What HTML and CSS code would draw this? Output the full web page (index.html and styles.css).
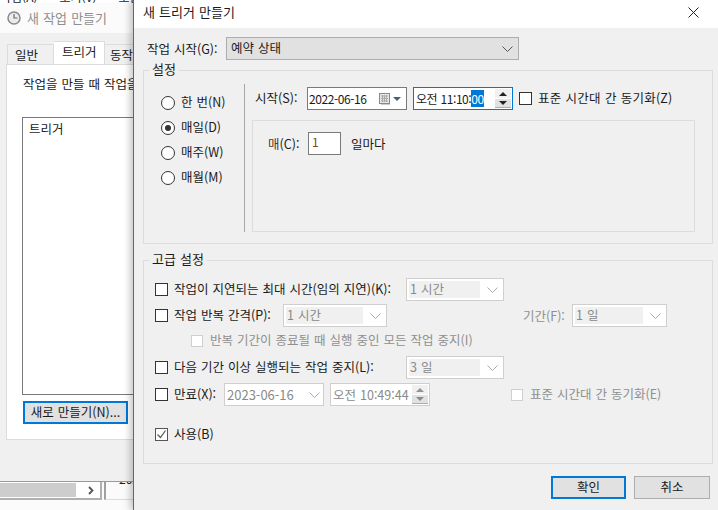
FILE: index.html
```html
<!DOCTYPE html>
<html lang="ko">
<head>
<meta charset="utf-8">
<title>새 트리거 만들기</title>
<link rel="stylesheet" href="styles.css">
</head>
<body>
<section class="backwin">
  <div class="strip"><span>작업(A)</span><span>보기(V)</span><span>도움말(H)</span></div>
  <div class="backtitle">
    <svg class="clock" width="14" height="14" viewBox="0 0 14 14"><circle cx="7" cy="7" r="6" fill="#ececec" stroke="#8a8a8a" stroke-width="1.500"/><path d="M7 3v4h3.500" fill="none" stroke="#6a6a6a" stroke-width="1.200"/></svg>
    <span>새 작업 만들기</span>
  </div>
  <div class="tabs">
    <span class="tab first">일반</span><span class="tab on">트리거</span><span class="tab last">동작</span>
  </div>
  <div class="panel">
    <p class="intro">작업을 만들 때 작업을 시작할 조건을</p>
    <div class="listbox">트리거</div>
    <div class="newbtn">새로 만들기(N)...</div>
  </div>
  <div class="backbottom">
    <div class="hscroll"><div class="thumb"></div><svg width="8" height="9" viewBox="0 0 8 9"><path d="M2 1l3.500 3.500L2 8" fill="none" stroke="#555" stroke-width="1.800"/></svg></div>
    <div class="cell"><span>2022</span></div>
  </div>
</section>

<section class="dialog">
  <header class="title"><span>새 트리거 만들기</span>
    <svg class="close" width="11" height="11" viewBox="0 0 11 11"><path d="M.5.5l10 10M10.500.5l-10 10" stroke="#222" fill="none"/></svg>
  </header>
  <div class="body">
    <div class="startrow">
      <label class="startlabel">작업 시작(G):</label>
      <div class="select active w293"><span class="seltext">예약 상태</span><svg class="chev" width="11" height="6" viewBox="0 0 11 6"><path d="M.5.5l5 5 5-5" fill="none" stroke="#555"/></svg></div>
    </div>

    <div class="group settings">
      <span class="legend">설정</span>
      <div class="radios">
        <div class="radio"><i class="dot"></i><span>한 번(N)</span></div>
        <div class="radio"><i class="dot sel"></i><span>매일(D)</span></div>
        <div class="radio"><i class="dot"></i><span>매주(W)</span></div>
        <div class="radio"><i class="dot"></i><span>매월(M)</span></div>
      </div>
      <div class="sched">
        <div class="row schedtop">
          <label class="lab52">시작(S):</label>
          <div class="field w100"><span class="tight">2022-06-16</span>
            <svg class="cal" width="25" height="14" viewBox="0 0 25 14"><rect x="1.500" y="1.500" width="10" height="10" fill="#e8e8e8" stroke="#888"/><path d="M3 4h7M3 6.500h7M3 9h7M4.500 3v7M6.500 3v7M8.500 3v7" stroke="#aaa" fill="none"/><path d="M12 12.500h-9" stroke="#ccc"/><path d="M15 5h8l-4 4z" fill="#4d5d73"/></svg>
          </div>
          <div class="field focus w100 gap6"><span class="semi">오전 11:10:<b class="hl">00</b></span>
            <div class="spin"><i class="up"></i><i class="down"></i></div>
          </div>
          <i class="cb gap6"></i><span class="cblabel">표준 시간대 간 동기화(Z)</span>
        </div>
        <div class="recur">
          <div class="row">
            <label class="lab40"><span class="accent">매</span>(C):</label>
            <div class="field w33"><span class="one">1</span></div>
            <span class="every">일마다</span>
          </div>
        </div>
      </div>
    </div>

    <div class="group advanced">
      <span class="legend">고급 설정</span>
      <div class="row r1">
        <i class="cb"></i><label class="lab232">작업이 지연되는 최대 시간(임의 지연)(K):</label>
        <div class="select dis w98"><span class="in">1 시간</span><svg class="chev" width="11" height="6" viewBox="0 0 11 6"><path d="M.5.5l5 5 5-5" fill="none" stroke="#aaa"/></svg></div>
      </div>
      <div class="row r2">
        <i class="cb"></i><label class="lab109">작업 반복 간격(P):</label>
        <div class="select dis w104"><span class="in">1 시간</span><svg class="chev" width="11" height="6" viewBox="0 0 11 6"><path d="M.5.5l5 5 5-5" fill="none" stroke="#aaa"/></svg></div>
        <label class="lab49 off">기간(F):</label>
        <div class="select dis w95"><span class="in">1 일</span><svg class="chev" width="11" height="6" viewBox="0 0 11 6"><path d="M.5.5l5 5 5-5" fill="none" stroke="#aaa"/></svg></div>
      </div>
      <div class="row r3"><i class="cb disabled"></i><span class="off">반복 기간이 종료될 때 실행 중인 모든 작업 중지(I)</span></div>
      <div class="row r4">
        <i class="cb"></i><label class="lab232">다음 기간 이상 실행되는 작업 중지(L):</label>
        <div class="select dis w98"><span class="in">3 일</span><svg class="chev" width="11" height="6" viewBox="0 0 11 6"><path d="M.5.5l5 5 5-5" fill="none" stroke="#aaa"/></svg></div>
      </div>
      <div class="row r5">
        <i class="cb"></i><label class="lab50">만료(X):</label>
        <div class="field dimmed w100"><span class="big">2023-06-16</span><svg class="chev" width="11" height="6" viewBox="0 0 11 6"><path d="M.5.5l5 5 5-5" fill="none" stroke="#aaa"/></svg></div>
        <div class="field dimmed w100 gap6"><span class="mid">오전 10:49:44</span><div class="spin dimspin"><i class="up"></i><i class="down"></i></div></div>
        <i class="cb disabled tz"></i><span class="off">표준 시간대 간 동기화(E)</span>
      </div>
      <div class="row r6">
        <i class="cb checked"><svg width="11" height="11" viewBox="0 0 11 11"><path d="M1.500 5.500l3 3 5-7" fill="none" stroke="#555" stroke-width="1.200"/></svg></i><label>사용(B)</label>
      </div>
    </div>

    <footer class="actions">
      <div class="btn primary">확인</div>
      <div class="btn">취소</div>
    </footer>
  </div>
</section>
</body>
</html>
```
FILE: styles.css
```css
* { box-sizing: border-box; }
html, body { margin: 0; height: 100%; }
body {
  width: 718px; height: 510px; position: relative; overflow: hidden;
  background: #fff; color: #1a1a1a;
  font: 12.5px/18px "Noto Sans CJK KR", "Noto Sans", sans-serif;
  word-spacing: .5px;
}
i { font-style: normal; display: block; }

/* back window */
.backwin { position: absolute; left: 0; top: 0; width: 134px; height: 510px; overflow: hidden; background: #f0f0f0; display: flex; flex-direction: column; }
.strip { height: 3px; background: #fff; overflow: hidden; display: flex; gap: 22px; font-size: 12px; line-height: 12px; white-space: nowrap; flex: none; }
.strip span { margin-top: -9px; }
.backtitle { height: 30px; background: #fbfbfb; display: flex; align-items: center; padding-left: 7px; color: #8e8e8e; flex: none; font-size: 13px; }
.backtitle span { margin-left: 6px; white-space: nowrap; }
.clock { flex: none; }
.tabs { height: 31px; flex: none; display: flex; align-items: flex-end; padding-left: 7px; white-space: nowrap; }
.tab { height: 20px; line-height: 19px; padding: 0 7px; background: #f0f0f0; border: 1px solid #dcdcdc; border-bottom: 0; border-left: 0; flex: none; }
.tab.first { width: 47px; padding-left: 7px; border-left: 1px solid #dcdcdc; }
.tab.on { width: 51px; height: 23px; background: #fff; line-height: 19px; padding-left: 8px; position: relative; z-index: 1; }
.tab.last { padding-left: 5px; }
.panel { height: 376px; flex: none; width: 160px; margin-left: 6px; background: #fff; border: 1px solid #dcdcdc; padding: 10px 0 0 16px; }
.intro { margin: 0; white-space: nowrap; height: 18px; }
.listbox { width: 140px; height: 278px; margin-top: 24px; margin-left: -1px; border: 1px solid #7a7a7a; padding: 2px 0 0 6px; background: #fff; }
.newbtn { width: 105px; height: 23px; margin-top: 6px; background: #e1e1e1; border: 2px solid #0078d7; line-height: 18px; text-align: center; white-space: nowrap; }
.backbottom { margin-top: 41px; border-top: 1px solid #9a9a9a; display: flex; flex: 1; background: #fbfbfb; }
.hscroll { width: 102px; height: 18px; border-right: 2px solid #b0b0b0; border-bottom: 2px solid #b0b0b0; background: #fff; display: flex; align-items: center; }
.thumb { width: 76px; height: 14px; background: #cdcdcd; margin-right: 11px; }
.cell { margin-left: 2px; height: 18px; padding-left: 13px; border-left: 2px solid #a0a0a0; border-bottom: 1px solid #dcdcdc; overflow: hidden; font-size: 12px; line-height: 12px; white-space: nowrap; flex: 1; }
.cell span { display: block; margin-top: -9px; }

/* front dialog */
.dialog { position: absolute; left: 133px; top: 0; width: 585px; height: 510px; background: #f0f0f0; border-left: 1px solid #666; box-shadow: -3px 0 7px rgba(0,0,0,.22); }
.title { height: 28px; background: #fff; display: flex; align-items: center; justify-content: space-between; padding: 0 19px 4px 9px; font-size: 13px; }
.body { padding: 9px 5px 0 9px; }
.startrow { display: flex; align-items: center; height: 23px; }
.startlabel { width: 83px; padding-left: 4px; white-space: nowrap; }
.w293 { width: 293px; }
.w98 { width: 98px; } .w104 { width: 104px; } .w95 { width: 95px; } .w100 { width: 100px; } .w33 { width: 33px; }
.select { height: 23px; display: flex; align-items: center; justify-content: space-between; flex: none; border: 1px solid #adadad; padding: 0 5px 0 4px; }
.select.active { background: #e1e1e1; }
.seltext { margin-top: -2px; }
.select.dis { background: #fff; border-color: #cfcfcf; padding: 2px 5px 2px 2px; color: #8a8a8a; }
.select.dis .in { flex: 1; height: 17px; line-height: 16px; background: #f0f0f0; padding-left: 1px; margin-right: 7px; }
.chev { flex: none; }

.group { position: relative; border: 1px solid #dcdcdc; width: 570px; }
.legend { position: absolute; left: 5px; top: -11px; line-height: 18px; padding: 0 3px; background: #f0f0f0; font-size: 13px; }
.settings { height: 174px; margin-top: 10px; padding-top: 13px; display: flex; }
.advanced { height: 204px; margin-top: 16px; padding: 17px 0 0 11px; }
.radios { width: 101px; padding: 6px 0 0 17px; border-right: 1px solid #a6a6a6; height: 148px; }
.radio { height: 25px; display: flex; align-items: center; white-space: nowrap; }
.radio span { margin-top: -2px; }
.dot { width: 14px; height: 14px; border-radius: 50%; border: 1px solid #333; background: #fff; margin-right: 6px; position: relative; flex: none; }
.dot.sel::after { content: ""; position: absolute; left: 3px; top: 3px; width: 6px; height: 6px; border-radius: 50%; background: #333; }
.sched { padding-left: 7px; }
.row { display: flex; align-items: center; white-space: nowrap; }
.schedtop { margin: 3px 0 0 3px; height: 23px; }
.schedtop > label, .schedtop > span, .r1 > label, .r2 > .lab109, .r3 > span, .r4 > label, .r5 > label, .r5 > span, .r6 > label { margin-top: -2px; }
.lab52 { width: 52px; } .lab40 { width: 40px; } .lab232 { width: 232px; } .lab109 { width: 109px; } .lab50 { width: 50px; }
.lab49 { width: 49px; margin-left: 136px; }
.field { height: 23px; background: #fff; border: 1px solid #7a7a7a; display: flex; align-items: center; justify-content: space-between; padding: 0 3px 0 2px; flex: none; }
.field span { font-size: 12px; }
.field .tight { letter-spacing: -.4px; margin-left: -1px; }
.field .semi { letter-spacing: -.45px; }
.field .big { font-size: 13px; }
.field .mid { font-size: 12.5px; }
.field.focus { border-color: #0078d7; }
.field.dimmed { border-color: #cfcfcf; color: #8a8a8a; }
.hl { background: #0078d7; color: #fff; font-weight: 400; }
.cal { flex: none; }
.gap6 { margin-left: 6px; }
.spin { width: 16px; height: 19px; display: flex; flex-direction: column; gap: 1px; flex: none; margin-right: -2px; }
.spin i { flex: 1; position: relative; background: #f0f0f0; }
.spin .down { background: #e1e1e1; border-bottom: 1px solid #adadad; }
.spin i::after { content: ""; position: absolute; left: 4px; border: 4px solid transparent; }
.spin .up::after { border-bottom-color: #222; border-top: 0; top: 3px; }
.spin .down::after { border-top-color: #222; border-bottom: 0; top: 2px; }
.dimspin i::after { opacity: .45; }
.cb { width: 13px; height: 13px; border: 1px solid #333; background: #fff; flex: none; margin-right: 6px; display: flex; align-items: center; justify-content: center; }
.cb svg { flex: none; }
.cb.checked { border-color: #555; }
.cblabel { letter-spacing: .2px; }
.recur { width: 443px; height: 112px; margin-top: 10px; border: 1px solid #dcdcdc; padding: 11px 0 0 15px; }
.accent { color: #5a3028; }
.one { color: #7a4a10; padding-left: 1px; margin-top: -3px; }
.every { margin-left: 10px; }
.r1, .r2, .r4, .r5 { height: 23px; }
.r2 { margin-top: 3px; }
.r3 { height: 13px; margin: 7px 0 0 36px; }
.r4 { margin-top: 9px; }
.r5 { margin-top: 4px; }
.r6 { height: 13px; margin-top: 22px; }
.cb.disabled { width: 12px; height: 12px; border-color: #cfcfcf; margin-right: 7px; }
.tz { margin-left: 81px; }
.off { color: #8f8f8f; }
.actions { display: flex; justify-content: flex-end; gap: 8px; margin-top: 12px; padding-right: 3px; }
.btn { width: 76px; height: 23px; background: #e1e1e1; border: 1px solid #adadad; text-align: center; line-height: 20px; }
.btn.primary { width: 75px; border: 2px solid #0078d7; line-height: 18px; }
```
